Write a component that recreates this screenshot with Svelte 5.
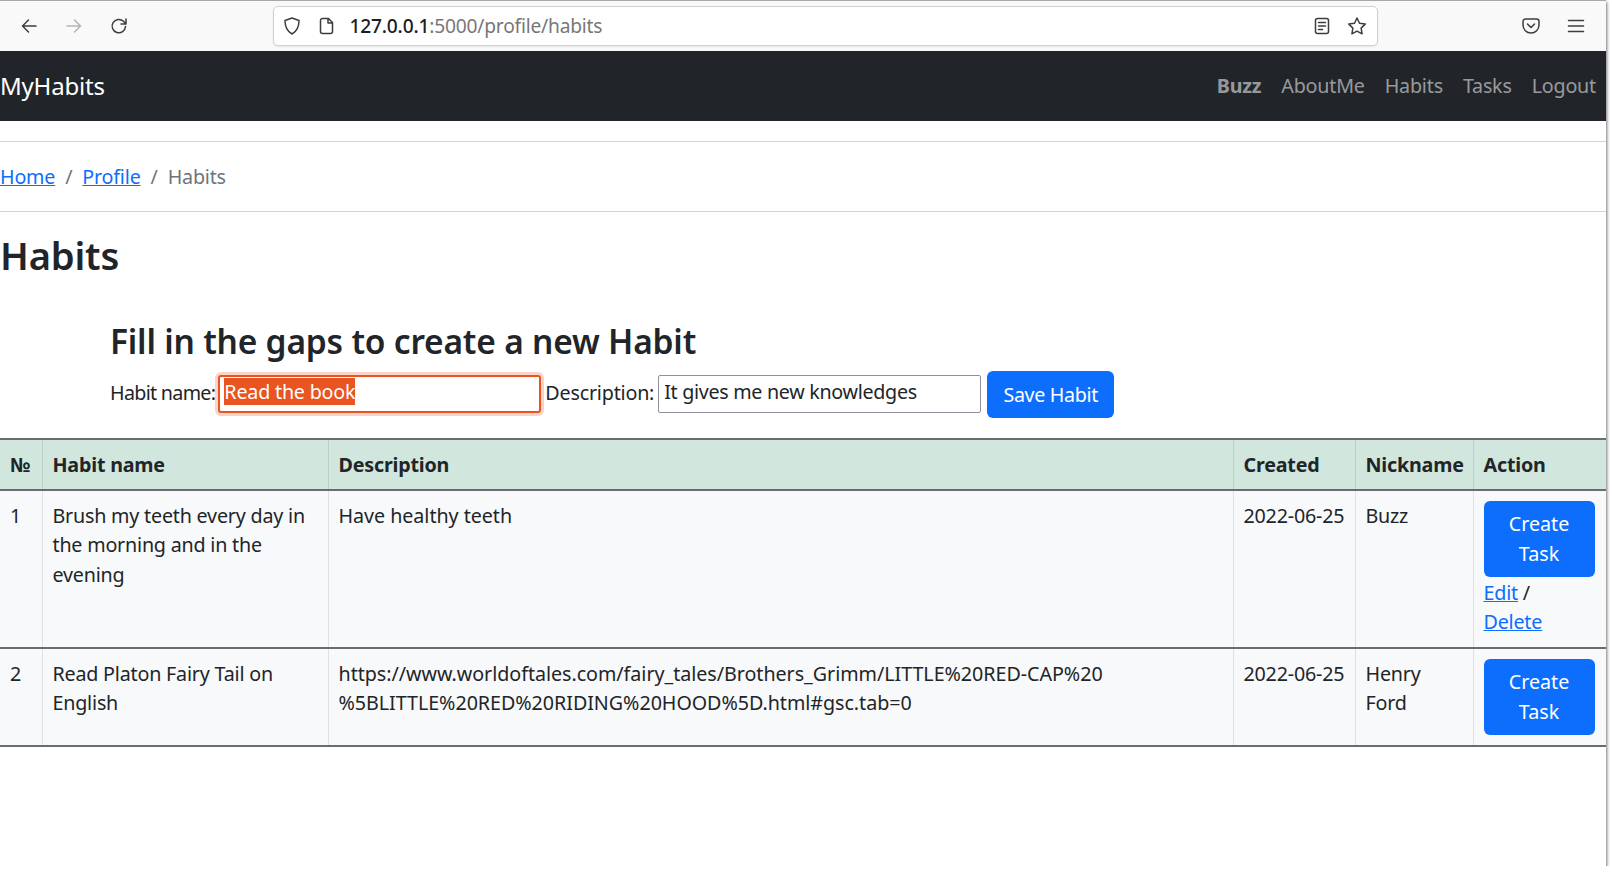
<script>
    import { onMount } from 'svelte';

    let nameInput;

    const habits = [
        {
            id: 1,
            name: 'Brush my teeth every day in the morning and in the evening',
            description: 'Have healthy teeth',
            created: '2022-06-25',
            nickname: 'Buzz',
            owner: true
        },
        {
            id: 2,
            name: 'Read Platon Fairy Tail on English',
            description:
                'https://www.worldoftales.com/fairy_tales/Brothers_Grimm/LITTLE%20RED-CAP%20 %5BLITTLE%20RED%20RIDING%20HOOD%5D.html#gsc.tab=0',
            created: '2022-06-25',
            nickname: 'Henry Ford',
            owner: false
        }
    ];

    onMount(() => {
        nameInput.focus();
        nameInput.select();
    });
</script>

<div class="page">
    <div class="toolbar">
        <div class="nav-buttons">
            <svg viewBox="0 0 20 20" class="icon"><path d="M17 10H4M9.500 4 3.500 10l6 6" /></svg>
            <svg viewBox="0 0 20 20" class="icon dim"><path d="M3 10h13M10.500 4l6 6-6 6" /></svg>
            <svg viewBox="0 0 20 20" class="icon"><path d="M16.500 10.500a6.700 6.700 0 1 1-2-5.200L17 8M17 3v5h-5" /></svg>
        </div>
        <div class="urlbar">
            <svg viewBox="0 0 20 20" class="icon shield"><path d="M10 2 3 4.500c0 6 1.500 10.500 7 13.500 5.500-3 7-7.500 7-13.500z" /></svg>
            <svg viewBox="0 0 20 20" class="icon page-icon"><path d="M5.500 2.500h6l4 4v9a2 2 0 0 1-2 2h-8a2 2 0 0 1-2-2v-11a2 2 0 0 1 2-2zM11 2.500v4.500h4.500" /></svg>
            <span class="url"><b>127.0.0.1</b>:5000/profile/habits</span>
            <svg viewBox="0 0 20 20" class="icon reader"><rect x="3.500" y="2.500" width="13" height="15" rx="2" /><path d="M6.500 6.500h7M6.500 10h7M6.500 13.500h4" /></svg>
            <svg viewBox="0 0 20 20" class="icon star"><path d="m10 2 2.500 5.300 5.700.8-4.100 4 1 5.700-5.100-2.700-5.100 2.700 1-5.700-4.100-4 5.700-.8z" /></svg>
        </div>
        <div class="toolbar-end">
            <svg viewBox="0 0 20 20" class="icon"><path d="M4.500 3h11A2.500 2.500 0 0 1 18 5.500V9a8 8 0 0 1-16 0V5.500A2.500 2.500 0 0 1 4.500 3zM6.500 8l3.500 3.500L13.500 8" /></svg>
            <svg viewBox="0 0 20 20" class="icon"><path d="M2.500 4.500h15M2.500 10h15M2.500 15.500h15" /></svg>
        </div>
    </div>

    <nav class="navbar">
        <a class="brand" href="/">MyHabits</a>
        <ul>
            <li><a class="current" href="/">Buzz</a></li>
            <li><a href="/">AboutMe</a></li>
            <li><a href="/">Habits</a></li>
            <li><a href="/">Tasks</a></li>
            <li><a href="/">Logout</a></li>
        </ul>
    </nav>

    <div class="crumbs">
        <a href="/">Home</a>
        <span class="sep">/</span>
        <a href="/">Profile</a>
        <span class="sep">/</span>
        <span class="muted">Habits</span>
    </div>

    <h2>Habits</h2>

    <div class="new-habit">
        <h3>Fill in the gaps to create a new Habit</h3>
        <form>
            <label class="name-label" for="name">Habit name:</label>
            <input id="name" class="name" value="Read the book" bind:this={nameInput} />
            <label for="description">Description:</label>
            <input id="description" value="It gives me new knowledges" />
            <button type="button" class="btn save">Save Habit</button>
        </form>
    </div>

    <table>
        <colgroup>
            <col class="c-num" />
            <col class="c-name" />
            <col class="c-desc" />
            <col class="c-created" />
            <col class="c-nick" />
            <col class="c-action" />
        </colgroup>
        <thead>
            <tr>
                <th>№</th>
                <th>Habit name</th>
                <th>Description</th>
                <th>Created</th>
                <th>Nickname</th>
                <th>Action</th>
            </tr>
        </thead>
        <tbody>
            {#each habits as habit}
                <tr>
                    <td>{habit.id}</td>
                    <td>{habit.name}</td>
                    <td class="desc">{habit.description}</td>
                    <td class="date">{habit.created}</td>
                    <td>{habit.nickname}</td>
                    <td>
                        <button type="button" class="btn task">Create Task</button>
                        {#if habit.owner}
                            <div class="links"><a href="/">Edit</a> / <a href="/">Delete</a></div>
                        {/if}
                    </td>
                </tr>
            {/each}
        </tbody>
    </table>
</div>

<style>
    :global(body) {
        margin: 0;
        background: #fff;
        font-family: 'Noto Sans', 'Open Sans', sans-serif;
        font-size: 19.7px;
        line-height: 1.5;
        letter-spacing: -0.2px;
        color: #212529;
    }

    .page {
        width: 1606px;
        height: 866px;
        overflow: hidden;
        box-shadow: 1px 2px 3px rgba(0, 0, 0, 0.55);
        background: #fff;
    }

    .toolbar {
        display: flex;
        align-items: center;
        height: 51px;
        box-sizing: border-box;
        background: #f9f9fa;
        border-top: 1px solid #a8a8a8;
        width: 1612px;
    }
    .icon {
        width: 20px;
        height: 20px;
        fill: none;
        stroke: #3d3d40;
        stroke-width: 1.5;
        stroke-linecap: round;
        stroke-linejoin: round;
        flex: none;
    }
    .icon.dim {
        stroke: #b4b4b6;
    }
    .nav-buttons {
        display: flex;
        gap: 25px;
        padding-left: 19px;
        width: 272.500px;
        box-sizing: border-box;
    }
    .urlbar {
        display: flex;
        align-items: center;
        width: 1105px;
        height: 40px;
        box-sizing: border-box;
        background: #fff;
        border: 1px solid #d0d0d2;
        border-radius: 5px;
        padding: 0 10px 0 8px;
        box-shadow: 0 1px 2px rgba(0, 0, 0, 0.08);
    }
    .page-icon {
        margin-left: 15px;
    }
    .url {
        flex: 1;
        margin-left: 13px;
        font-size: 19.200px;
        color: #77777a;
    }
    .url b {
        font-weight: 500;
        color: #1d1d20;
    }
    .star {
        margin-left: 15px;
    }
    .toolbar-end {
        display: flex;
        gap: 25px;
        margin-left: 143px;
    }

    .navbar {
        display: flex;
        justify-content: space-between;
        align-items: center;
        height: 70px;
        background: #212529;
    }
    .brand {
        font-size: 24px;
        color: #fff;
        text-decoration: none;
    }
    .navbar ul {
        display: flex;
        gap: 20px;
        margin: 0;
        padding: 0 10px 0 0;
        list-style: none;
    }
    .navbar li a {
        color: rgba(255, 255, 255, 0.55);
        text-decoration: none;
    }
    .navbar li a.current {
        font-weight: 700;
    }

    .crumbs {
        display: flex;
        gap: 10px;
        margin-top: 20px;
        height: 71px;
        box-sizing: border-box;
        align-items: center;
        border-top: 1px solid #d3d4d5;
        border-bottom: 1px solid #d3d4d5;
    }
    a {
        color: #0d6efd;
    }
    .muted {
        color: #6c757d;
    }
    .sep {
        color: #6c757d;
    }

    h2 {
        margin: 21px 0 0;
        font-size: 38.200px;
        line-height: 1.2;
        font-weight: 600;
        letter-spacing: -0.2px;
    }

    .new-habit {
        padding-left: 110px;
        margin-top: 42px;
    }
    h3 {
        margin: 0;
        font-size: 33.500px;
        line-height: 1.2;
        font-weight: 600;
        letter-spacing: -0.2px;
    }
    form {
        display: flex;
        align-items: center;
        height: 47px;
        margin-top: 9px;
        gap: 4px;
    }
    label {
        padding-bottom: 2px;
    }
    .name-label {
        letter-spacing: -0.7px;
    }
    input {
        width: 323px;
        height: 38px;
        box-sizing: border-box;
        margin: 0;
        padding: 0 5px 4px;
        border: 1px solid #8f8f9d;
        border-radius: 2px;
        font: inherit;
        letter-spacing: -0.3px;
        color: #212529;
        outline: none;
    }
    input.name {
        margin-left: -1px;
        padding-left: 4px;
        letter-spacing: -0.2px;
        border: 2px solid #e95420;
        box-shadow: 0 0 0 3px #f9d5c7;
        border-radius: 3px;
    }
    input::selection {
        background: #e95420;
        color: #fff;
    }
    .btn {
        border: none;
        border-radius: 6px;
        background: #0d6efd;
        color: #fff;
        font: inherit;
        text-align: center;
    }
    .save {
        height: 47px;
        width: 127px;
        margin-left: 2px;
        margin-top: 2px;
        letter-spacing: -0.35px;
    }

    table {
        width: 1606px;
        margin-top: 21px;
        table-layout: fixed;
        border-collapse: collapse;
    }
    .c-num {
        width: 42px;
    }
    .c-name {
        width: 286px;
    }
    .c-created {
        width: 122px;
    }
    .c-nick {
        width: 118px;
    }
    .c-action {
        width: 133px;
    }
    th,
    td {
        padding: 10px;
        vertical-align: top;
        text-align: left;
        border-left: 1px solid #dee2e6;
        border-bottom: 2px solid #6a6d70;
    }
    th:first-child,
    td:first-child {
        border-left: none;
    }
    th {
        padding-top: 10px;
        padding-bottom: 9px;
        background: #d1e7dd;
        border-top: 2px solid #6a6d70;
        border-left-color: #bcd0c7;
        font-weight: 700;
    }
    td {
        background: #f8f9fa;
    }
    td.desc {
        letter-spacing: -0.04px;
    }
    td.date {
        white-space: nowrap;
    }
    .task {
        display: block;
        width: 111px;
        height: 76px;
        padding: 0 20px;
    }
    .links {
        margin-top: 1px;
        width: 70px;
        color: #212529;
    }
</style>
